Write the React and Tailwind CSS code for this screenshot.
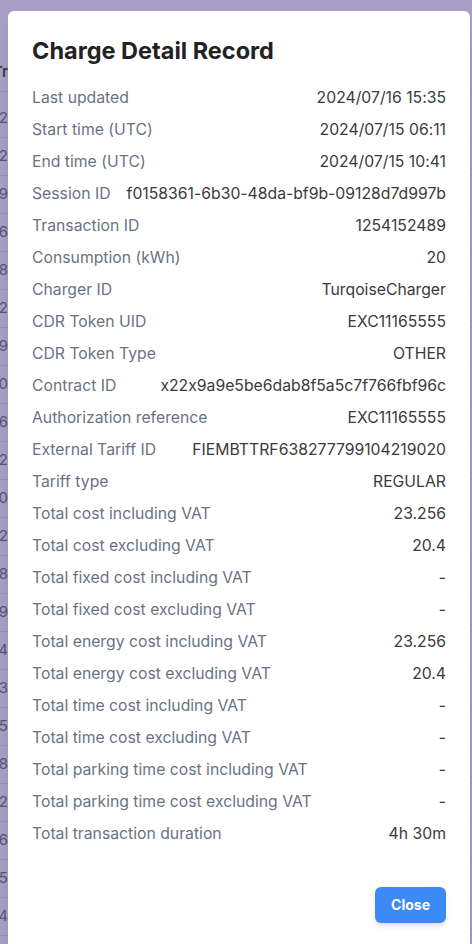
import React from 'react';

// --- Données du CDR ---
const rows = [
  ['Last updated', '2024/07/16 15:35'],
  ['Start time (UTC)', '2024/07/15 06:11'],
  ['End time (UTC)', '2024/07/15 10:41'],
  ['Session ID', 'f0158361-6b30-48da-bf9b-09128d7d997b'],
  ['Transaction ID', '1254152489'],
  ['Consumption (kWh)', '20'],
  ['Charger ID', 'TurqoiseCharger'],
  ['CDR Token UID', 'EXC11165555'],
  ['CDR Token Type', 'OTHER'],
  ['Contract ID', 'x22x9a9e5be6dab8f5a5c7f766fbf96c'],
  ['Authorization reference', 'EXC11165555'],
  ['External Tariff ID', 'FIEMBTTRF638277799104219020'],
  ['Tariff type', 'REGULAR'],
  ['Total cost including VAT', '23.256'],
  ['Total cost excluding VAT', '20.4'],
  ['Total fixed cost including VAT', '-'],
  ['Total fixed cost excluding VAT', '-'],
  ['Total energy cost including VAT', '23.256'],
  ['Total energy cost excluding VAT', '20.4'],
  ['Total time cost including VAT', '-'],
  ['Total time cost excluding VAT', '-'],
  ['Total parking time cost including VAT', '-'],
  ['Total parking time cost excluding VAT', '-'],
  ['Total transaction duration', '4h 30m'],
];

// table en arrière-plan (à moitié cachée par la modale)
const bgCells = ['12', '162', '189', '16', '18', '172', '159', '150', '196', '162', '120', '12', '18', '199', '174', '193', '15', '18', '12', '16', '15', '14'];

export default function App() {
  return (
    <div
      className="relative h-[944px] w-[472px] overflow-hidden bg-[#a7a0c4] [font-feature-settings:'calt'_0]"
      style={{ fontFamily: 'Inter, "Noto Sans", sans-serif' }}
    >
      {/* TABLE DERRIÈRE */}
      <div className="pt-[54px]">
        <div className="flex h-[38px] items-center justify-end border-b border-[#9a93b8] pr-[464px] text-[15px] font-semibold text-[#3d3852]">
          Tr
        </div>
        <div className="mt-2">
          {bgCells.map((c, i) => (
            <div
              key={i}
              className="flex h-[38px] items-center justify-end border-b border-[#9a93b8] pr-[464px] text-[15px] text-[#5b5573]"
            >
              {c}
            </div>
          ))}
        </div>
      </div>

      {/* MODALE */}
      <div className="absolute left-2 top-[11px] h-[960px] w-[462px] rounded-md bg-white p-6 shadow-xl">
        <h2 className="mb-[15px] text-[23.5px] leading-8 font-bold text-[#222222]">Charge Detail Record</h2>

        <div>
          {rows.map(([label, value]) => (
            <div key={label} className="flex h-8 items-center justify-between gap-3 text-[15.75px]">
              <span className="whitespace-nowrap text-[#687386]">{label}</span>
              <span className="whitespace-nowrap text-[#3a3a3a]">{value}</span>
            </div>
          ))}
        </div>

        <div className="mt-[37px] flex justify-end">
          <button className="h-9 rounded-md bg-[#3b8af5] px-4 text-sm font-bold text-white shadow-md">
            Close
          </button>
        </div>
      </div>
    </div>
  );
}
